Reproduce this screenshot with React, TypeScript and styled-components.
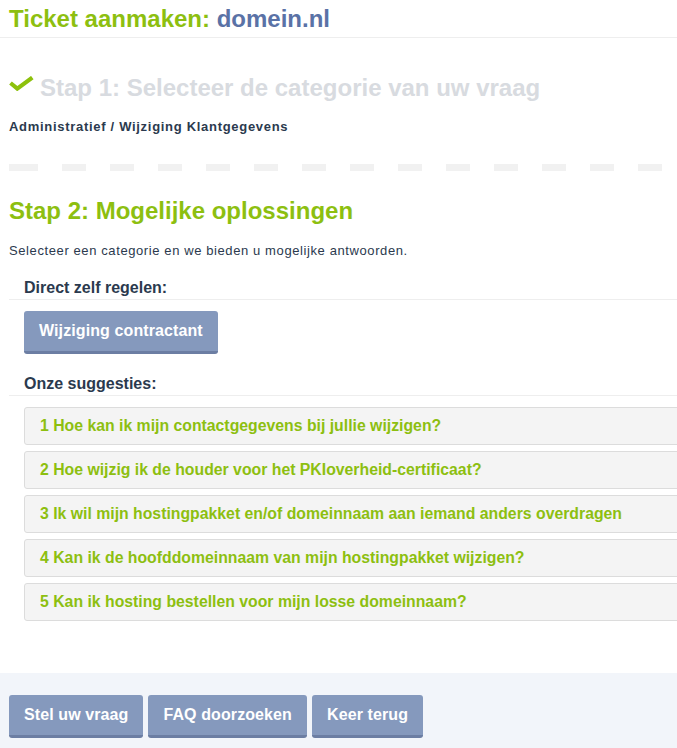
import React from 'react';
import styled, { createGlobalStyle } from 'styled-components';

const suggestions = [
    'Hoe kan ik mijn contactgegevens bij jullie wijzigen?',
    'Hoe wijzig ik de houder voor het PKIoverheid-certificaat?',
    'Ik wil mijn hostingpakket en/of domeinnaam aan iemand anders overdragen',
    'Kan ik de hoofddomeinnaam van mijn hostingpakket wijzigen?',
    'Kan ik hosting bestellen voor mijn losse domeinnaam?',
];

const CheckIcon = () => (
    <svg width="25" height="15" viewBox="0 0 25 15" aria-hidden="true">
        <path d="M1.5 7 L8.3 12.6 L23.3 1.6" fill="none" stroke="#8dc10c" strokeWidth="4.2" />
    </svg>
);

const App = () => {
    return (
        <>
            <GlobalStyle />
            <Page>
                <Header>
                    <Title>
                        Ticket aanmaken: <Domain>domein.nl</Domain>
                    </Title>
                </Header>

                <StepOne>
                    <StepTitle $done>
                        <CheckIcon />
                        Stap 1: Selecteer de categorie van uw vraag
                    </StepTitle>
                    <Breadcrumb>Administratief / Wijziging Klantgegevens</Breadcrumb>
                </StepOne>

                <Divider />

                <StepTwo>
                    <StepTitle>Stap 2: Mogelijke oplossingen</StepTitle>
                    <Intro>Selecteer een categorie en we bieden u mogelijke antwoorden.</Intro>

                    <GroupLabel>Direct zelf regelen:</GroupLabel>
                    <GroupBody>
                        <Button>Wijziging contractant</Button>
                    </GroupBody>

                    <GroupLabel $gap={20}>Onze suggesties:</GroupLabel>
                    <SuggestionList>
                        {suggestions.map((s, i) => (
                            <Suggestion key={i}>
                                {i + 1} {s}
                            </Suggestion>
                        ))}
                    </SuggestionList>
                </StepTwo>
            </Page>

            <Footer>
                <Button>Stel uw vraag</Button>
                <Button>FAQ doorzoeken</Button>
                <Button>Keer terug</Button>
            </Footer>
        </>
    )
}

const GlobalStyle = createGlobalStyle`
    body {
        margin: 0;
        background: #fff;
        overflow: hidden;
        font-family: "Liberation Sans", Arial, sans-serif;
    }
`;

const Page = styled.div`
    width: 700px;
`;

const Header = styled.header`
    padding: 5px 9px 4px;
    border-bottom: 1px solid #eeeeee;
`;

const Title = styled.h1`
    margin: 0;
    font-size: 24px;
    line-height: 28px;
    font-weight: bold;
    color: #8dbf10;
`;

const Domain = styled.span`
    color: #5a72a6;
`;

const StepOne = styled.section`
    padding: 36px 9px 0;
`;

const StepTitle = styled.h2<{ $done?: boolean }>`
    display: flex;
    align-items: flex-start;
    gap: 6px;
    margin: 0;
    font-size: 24px;
    line-height: 28px;
    font-weight: bold;
    color: ${p => (p.$done ? '#d8dbe0' : '#8dbf10')};

    svg {
        margin-top: 2px;
    }
`;

const Breadcrumb = styled.div`
    margin-top: 16px;
    font-size: 13px;
    line-height: 18px;
    font-weight: bold;
    letter-spacing: 0.7px;
    color: #2b3a4e;
`;

const Divider = styled.div`
    margin: 28px 0 0 9px;
    width: 653px;
    height: 7px;
    background:
        linear-gradient(#f1f1f1, #f1f1f1) 0 0 / 5px 100% no-repeat,
        repeating-linear-gradient(90deg, #f1f1f1 0 24px, transparent 24px 48px) 5px 0 / 100% 100% no-repeat;
`;

const StepTwo = styled.section`
    padding: 26px 0 0 9px;
`;

const Intro = styled.p`
    margin: 17px 0 0;
    font-size: 13px;
    line-height: 18px;
    letter-spacing: 0.6px;
    color: #2b3a4e;
`;

const GroupLabel = styled.h3<{ $gap?: number }>`
    margin: ${p => p.$gap ?? 18}px 0 0;
    padding: 0 0 1px 15px;
    border-bottom: 1px solid #eeeeee;
    font-size: 16px;
    line-height: 20px;
    font-weight: bold;
    color: #2b3a4e;
`;

const GroupBody = styled.div`
    padding: 11px 0 0 15px;
`;

const Button = styled.button`
    padding: 10px 15px;
    border: 0;
    border-bottom: 3px solid #6c7ea3;
    border-radius: 3px;
    background: #8599bd;
    color: #fff;
    font-family: "Liberation Sans", Arial, sans-serif;
    font-size: 16px;
    line-height: 20px;
    font-weight: bold;
    letter-spacing: 0.1px;
    cursor: pointer;
`;

const SuggestionList = styled.div`
    display: flex;
    flex-direction: column;
    gap: 6px;
    padding: 11px 0 0 15px;
`;

const Suggestion = styled.div`
    padding: 8px 15px;
    border: 1px solid #dcdcdc;
    border-radius: 3px;
    background: #f4f4f4;
    color: #8dbf10;
    font-size: 15.8px;
    line-height: 20px;
    font-weight: bold;
    cursor: pointer;
`;

const Footer = styled.footer`
    display: flex;
    gap: 5px;
    margin-top: 52px;
    padding: 22px 9px 30px;
    background: #f2f5fa;
`;

export default App
